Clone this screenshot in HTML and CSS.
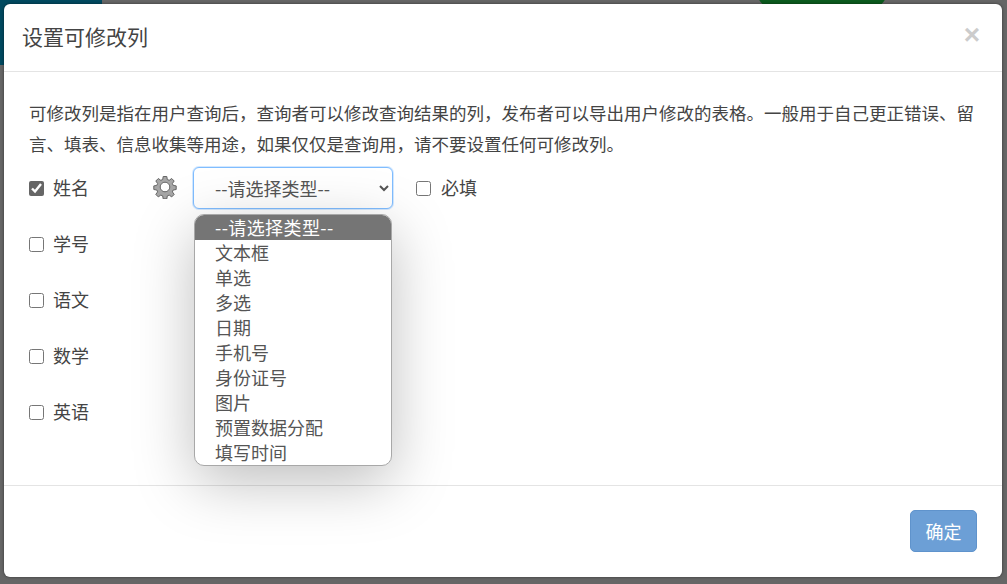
FILE: index.html
```html
<!DOCTYPE html>
<html lang="zh-CN">
<head>
<meta charset="utf-8">
<title>设置可修改列</title>
<link rel="stylesheet" href="styles.css">
</head>
<body>
<div class="page-bg">
  <div class="bg-teal"></div>
  <div class="bg-green"></div>
</div>
<div class="modal">
  <header class="modal-header">
    <h5 class="modal-title">设置可修改列</h5>
    <span class="close">×</span>
  </header>
  <main class="modal-body">
    <p class="intro">可修改列是指在用户查询后，查询者可以修改查询结果的列，发布者可以导出用户修改的表格。一般用于自己更正错误、留言、填表、信息收集等用途，如果仅仅是查询用，请不要设置任何可修改列。</p>
    <div class="row">
      <label class="check"><input type="checkbox" checked><span>姓名</span></label>
      <svg class="gear" viewBox="0 0 24 24" aria-hidden="true">
        <path fill="#a6a6a6" stroke="#666" stroke-width="1" fill-rule="evenodd" d="M10.200 1.500h3.600l.5 3 1.900.8 2.500-1.800 2.500 2.500-1.800 2.500.8 1.900 3 .5v3.600l-3 .5-.8 1.900 1.800 2.500-2.500 2.500-2.500-1.800-1.900.8-.5 3h-3.600l-.5-3-1.900-.8-2.500 1.800-2.500-2.500 1.800-2.500-.8-1.900-3-.5v-3.600l3-.5.8-1.900-1.800-2.500 2.500-2.500 2.500 1.800 1.900-.8zM12 7.200a4.800 4.800 0 1 0 0 9.600 4.800 4.800 0 0 0 0-9.600z"/>
      </svg>
      <div class="select-wrap">
        <select class="type-select"><option>--请选择类型--</option></select>
        <ul class="dropdown">
          <li class="selected">--请选择类型--</li>
          <li>文本框</li>
          <li>单选</li>
          <li>多选</li>
          <li>日期</li>
          <li>手机号</li>
          <li>身份证号</li>
          <li>图片</li>
          <li>预置数据分配</li>
          <li>填写时间</li>
        </ul>
      </div>
      <label class="check required"><input type="checkbox"><span>必填</span></label>
    </div>
    <div class="row"><label class="check"><input type="checkbox"><span>学号</span></label></div>
    <div class="row"><label class="check"><input type="checkbox"><span>语文</span></label></div>
    <div class="row"><label class="check"><input type="checkbox"><span>数学</span></label></div>
    <div class="row"><label class="check"><input type="checkbox"><span>英语</span></label></div>
  </main>
  <footer class="modal-footer">
    <button class="btn" disabled>确定</button>
  </footer>
</div>
</body>
</html>
```
FILE: styles.css
```css
* { box-sizing: border-box; }
html, body { margin: 0; height: 584px; overflow: hidden; }
body {
  background: #666;
  font-family: "Noto Sans CJK SC", "Liberation Sans", sans-serif;
  color: #212529;
  padding: 4px 5px 7px 4px;
}
.page-bg { position: absolute; inset: 0; overflow: hidden; }
.bg-teal { position: absolute; left: 0; top: 0; width: 102px; height: 65px; background: #00495f; }
.bg-green { position: absolute; left: 758px; top: -30px; width: 128px; height: 50px; border-radius: 50%; background: #0b5a1e; }
.modal {
  position: relative;
  height: 573px;
  background: #fff;
  border-radius: 6px;
  box-shadow: 0 0 3px rgba(0,0,0,.5);
  display: flex;
  flex-direction: column;
}
.modal-header {
  height: 68px;
  flex: none;
  border-bottom: 1px solid #e4e4e4;
  padding: 0 22px 4px 18px;
  display: flex;
  justify-content: space-between;
  align-items: center;
}
.modal-title { margin: 0; font-size: 21px; line-height: 30px; font-weight: 400; color: #444; }
.close { font-family: "Liberation Sans", sans-serif; font-size: 28px; font-weight: 700; line-height: 1; color: #ccc; margin-top: -1px; }
.modal-body { flex: 1; padding: 25px 25px 0; }
.intro { margin: 0 0 8px; font-size: 17.5px; line-height: 31px; color: #444; }
.row { height: 56px; display: flex; align-items: flex-start; }
.check { display: flex; align-items: center; height: 42px; font-size: 18px; color: #444; }
.check input { width: 15px; height: 15px; margin: 0 9px 0 0; accent-color: #666; }
.check span { position: relative; top: -1px; }
.gear { width: 24px; height: 24px; margin: 8px 0 0 64px; flex: none; }
.select-wrap { position: relative; width: 200px; margin-left: 16px; flex: none; }
.type-select {
  display: block;
  width: 200px;
  height: 42px;
  padding: 0 8px 0 17px;
  font: 18px "Noto Sans CJK SC", "Liberation Sans", sans-serif;
  color: #555;
  background: #fff;
  border: 1px solid #80bdff;
  border-radius: 6px;
  box-shadow: 0 0 0 1px rgba(128,189,255,.35);
  outline: none;
}
.dropdown {
  position: absolute;
  z-index: 5;
  left: 1px;
  top: 47px;
  width: 198px;
  margin: 0;
  padding: 0;
  list-style: none;
  background: #fff;
  border: 1px solid #a8a8a8;
  border-radius: 10px;
  box-shadow: 0 16px 60px rgba(0,0,0,.26);
  overflow: hidden;
}
.dropdown li { height: 25px; line-height: 25px; padding-left: 20px; font-size: 18px; color: #555; }
.dropdown li.selected { background: #757575; color: #fff; letter-spacing: .4px; }
.required { margin-left: 23px; }
.required input { margin-right: 10px; }
.modal-footer {
  height: 92px;
  flex: none;
  border-top: 1px solid #e4e4e4;
  padding: 24px 25px 0 0;
  display: flex;
  justify-content: flex-end;
  align-items: flex-start;
}
.btn {
  width: 67px;
  height: 42px;
  font: 18px "Noto Sans CJK SC", "Liberation Sans", sans-serif;
  color: #fff;
  background: #6c9fd6;
  border: 1px solid #5f93cc;
  border-radius: 5px;
  padding: 0;
}
```
